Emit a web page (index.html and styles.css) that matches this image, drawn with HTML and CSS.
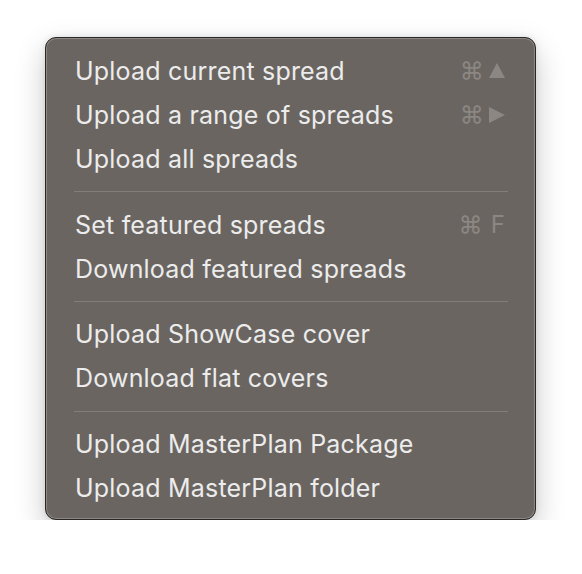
FILE: index.html
```html
<!DOCTYPE html>
<html>
<head>
<meta charset="utf-8">
<link rel="stylesheet" href="styles.css">
</head>
<body>
<div class="menu">
  <div class="item"><span class="label">Upload current spread</span><span class="key"><span class="cmd">⌘</span><svg class="tri" viewBox="0 0 16 15" width="16" height="15"><path d="M8 0 L16 15 L0 15 Z" fill="currentColor"/></svg></span></div>
  <div class="item"><span class="label">Upload a range of spreads</span><span class="key"><span class="cmd">⌘</span><svg class="tri" viewBox="0 0 16 16" width="16" height="16"><path d="M0 0 L16 8 L0 16 Z" fill="currentColor"/></svg></span></div>
  <div class="item"><span class="label">Upload all spreads</span></div>
  <div class="sep"></div>
  <div class="item"><span class="label">Set featured spreads</span><span class="key"><span class="cmd">⌘</span><span class="letter">F</span></span></div>
  <div class="item"><span class="label">Download featured spreads</span></div>
  <div class="sep"></div>
  <div class="item"><span class="label">Upload ShowCase cover</span></div>
  <div class="item"><span class="label">Download flat covers</span></div>
  <div class="sep"></div>
  <div class="item"><span class="label">Upload MasterPlan Package</span></div>
  <div class="item"><span class="label">Upload MasterPlan folder</span></div>
</div>
</body>
</html>
```
FILE: styles.css
```css
html, body {
  margin: 0;
  padding: 0;
  background: #ffffff;
}
body {
  padding: 37px 0 0 45px;
  font-family: "Inter", "Liberation Sans", sans-serif;
}
.menu {
  box-sizing: border-box;
  width: 491px;
  height: 483px;
  background: #6a6561;
  border: 1px solid #2a2826;
  border-radius: 11px;
  box-shadow: inset 0 0 0 1px #8d8884, 0 12px 30px rgba(0,0,0,0.22), 0 0 6px rgba(0,0,0,0.10);
  padding: 11px 27px 9px 28px;
  display: flex;
  flex-direction: column;
}
.item {
  height: 44px;
  display: flex;
  align-items: center;
  justify-content: space-between;
  color: #ececec;
  font-size: 25px;
  letter-spacing: 0.2px;
  padding-left: 1px;
}
.key {
  color: #8c8783;
  display: flex;
  align-items: center;
  gap: 5px;
  margin-right: 3px;
}
.cmd {
  font-size: 24px;
}
.tri {
  display: block;
}
.letter {
  font-size: 24px;
  margin-left: 3px;
}
.sep {
  height: 22px;
  display: flex;
  align-items: center;
}
.sep::before {
  content: "";
  display: block;
  width: 100%;
  height: 1px;
  background: #827d79;
}
```
